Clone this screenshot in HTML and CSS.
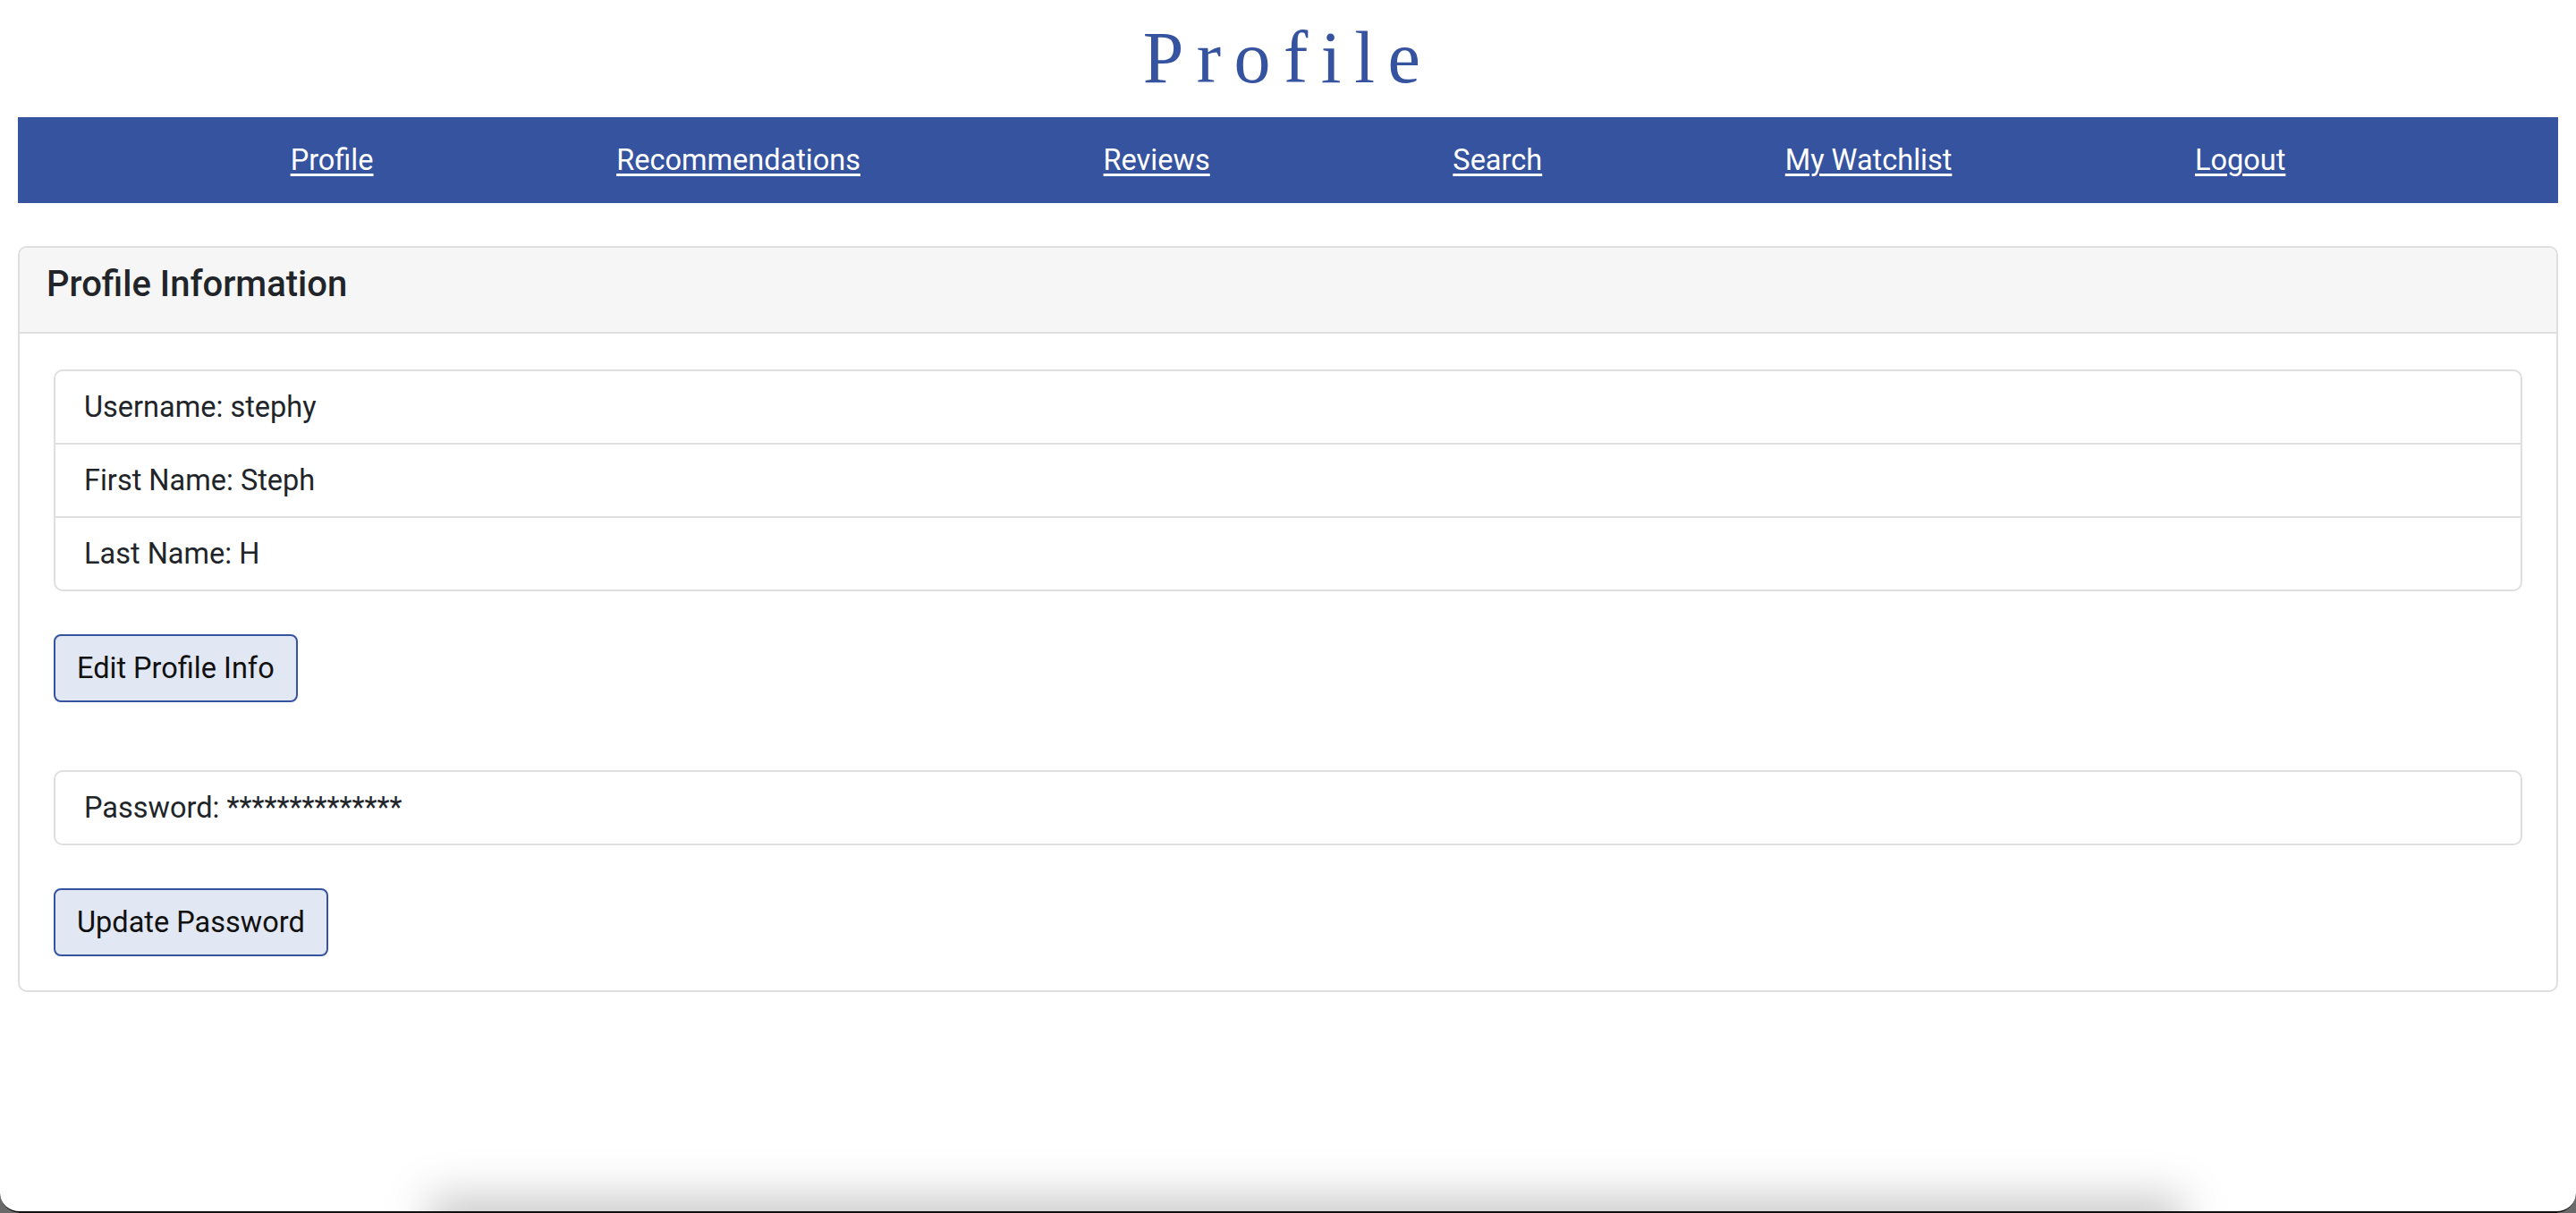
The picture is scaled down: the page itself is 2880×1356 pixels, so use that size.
FILE: index.html
```html
<!DOCTYPE html>
<html lang="en">
<head>
<meta charset="utf-8">
<title>Profile</title>
<link rel="stylesheet" href="styles.css">
</head>
<body>
  <h1 class="page-title">Profile</h1>
  <nav class="main-nav">
    <a href="#" class="nav-link">Profile</a>
    <a href="#" class="nav-link">Recommendations</a>
    <a href="#" class="nav-link">Reviews</a>
    <a href="#" class="nav-link">Search</a>
    <a href="#" class="nav-link">My Watchlist</a>
    <a href="#" class="nav-link">Logout</a>
  </nav>
  <section class="card">
    <div class="card-header">
      <h5 class="card-title">Profile Information</h5>
    </div>
    <div class="card-body">
      <ul class="list-group">
        <li class="list-item">Username: stephy</li>
        <li class="list-item">First Name: Steph</li>
        <li class="list-item">Last Name: H</li>
      </ul>
      <button class="btn btn-edit">Edit Profile Info</button>
      <ul class="list-group list-password">
        <li class="list-item">Password: **************</li>
      </ul>
      <button class="btn">Update Password</button>
    </div>
  </section>
  <div class="bottom-shadow"></div>
  <div class="window-frame"></div>
</body>
</html>
```

FILE: styles.css
```css
html, body {
  margin: 0;
  padding: 0;
  background: #ffffff;
}

body {
  font-family: Roboto, "Liberation Sans", Arial, sans-serif;
  font-size: 32.5px;
  color: #212529;
  height: 1356px;
  overflow: hidden;
  position: relative;
}

.page-title {
  margin: 0;
  padding: 18px 0 19px;
  line-height: 94px;
  font-family: "Liberation Serif", "Times New Roman", serif;
  font-weight: normal;
  font-size: 82px;
  letter-spacing: 14.5px;
  text-align: center;
  color: #3653a0;
}

.main-nav {
  margin: 0 20px;
  height: 96px;
  padding: 0 33px;
  background: #3653a0;
  display: flex;
  align-items: center;
  justify-content: space-evenly;
}

.nav-link {
  color: #ffffff;
  text-decoration: underline;
  text-decoration-thickness: 3px;
  text-underline-offset: 4px;
  font-size: 32.5px;
  line-height: 48px;
}

.card {
  margin: 48px 20px 0;
  border: 2px solid #dfdfdf;
  border-radius: 10px;
  overflow: hidden;
}

.card-header {
  background: #f6f6f6;
  border-bottom: 2px solid #dfdfdf;
  padding: 17px 30px 29px;
}

.card-title {
  margin: 0;
  font-size: 40px;
  font-weight: 500;
  line-height: 48px;
}

.card-body {
  padding: 40px 38px 38px;
}

.list-group {
  list-style: none;
  margin: 0;
  padding: 0;
  border: 2px solid #dfdfdf;
  border-radius: 10px;
}

.list-item {
  padding: 16px 32px 16px;
  line-height: 48px;
}

.list-item + .list-item {
  border-top: 2px solid #dfdfdf;
}

.btn {
  display: block;
  margin-top: 48px;
  font-family: inherit;
  font-size: 32.5px;
  line-height: 48px;
  color: #111111;
  background: #e1e7f3;
  border: 2px solid #3653a0;
  border-radius: 8px;
  padding: 12px 24px;
}

.list-password {
  margin-top: 76px;
}

.bottom-shadow {
  position: absolute;
  left: 480px;
  right: 440px;
  top: 1336px;
  height: 80px;
  background: rgba(0, 0, 0, 0.2);
  filter: blur(24px);
  pointer-events: none;
}

.window-frame {
  position: absolute;
  left: 0;
  right: 0;
  top: 0;
  height: 1356px;
  box-sizing: border-box;
  border-bottom: 2px solid #111111;
  border-radius: 0 0 22px 22px;
  box-shadow: 0 0 0 60px #6a6a6a;
  pointer-events: none;
}
```
